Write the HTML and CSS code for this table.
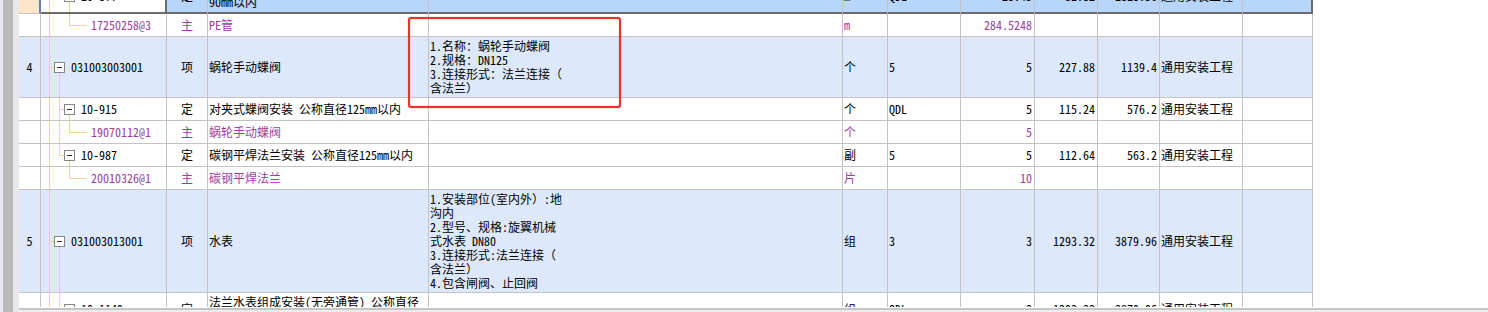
FILE: index.html
```html
<!DOCTYPE html>
<html lang="zh-CN">
<head>
<meta charset="utf-8">
<title>分部分项</title>
<link rel="stylesheet" href="styles.css">
</head>
<body>
<div class="app">
  <div class="side"><div class="sa"></div><div class="sb"></div><div class="sc"></div></div>
  <div class="main">
    <div class="view">
      <table class="grid">
        <colgroup>
          <col class="c-num"><col class="c-code"><col class="c-type"><col class="c-name"><col class="c-desc"><col class="c-unit"><col class="c-expr"><col class="c-qty"><col class="c-price"><col class="c-total"><col class="c-prof"><col class="c-last">
        </colgroup>
        <tbody>
          <tr class="sel">
            <td class="num"></td>
            <td class="code t-l2last"><div class="tree l2"><span class="tog"></span><span>10-377</span></div></td>
            <td class="type">定</td>
            <td class="ml top">室内塑料给水管(热熔连接) 公称外径<br>90mm以内</td>
            <td></td>
            <td>m</td>
            <td>QDL</td>
            <td class="r">28.45</td>
            <td class="r">81.32</td>
            <td class="r">2313.56</td>
            <td>通用安装工程</td>
            <td class="last"></td>
          </tr>
          <tr class="mat">
            <td class="num"></td>
            <td class="code t-l3end"><div class="tree l3"><span>17250258@3</span></div></td>
            <td class="type">主</td>
            <td>PE管</td>
            <td></td>
            <td>m</td>
            <td></td>
            <td class="r">284.5248</td>
            <td></td>
            <td></td>
            <td></td>
            <td></td>
          </tr>
          <tr class="item">
            <td class="num">4</td>
            <td class="code t-l1"><div class="tree l1"><span class="tog"></span><span>031003003001</span></div></td>
            <td class="type">项</td>
            <td>蜗轮手动蝶阀</td>
            <td class="ml">1.名称：蜗轮手动蝶阀<br>2.规格：DN125<br>3.连接形式：法兰连接（<br>含法兰）</td>
            <td>个</td>
            <td>5</td>
            <td class="r">5</td>
            <td class="r">227.88</td>
            <td class="r">1139.4</td>
            <td>通用安装工程</td>
            <td></td>
          </tr>
          <tr>
            <td class="num"></td>
            <td class="code t-l2mid"><div class="tree l2"><span class="tog"></span><span>10-915</span></div></td>
            <td class="type">定</td>
            <td>对夹式蝶阀安装 公称直径125mm以内</td>
            <td></td>
            <td>个</td>
            <td>QDL</td>
            <td class="r">5</td>
            <td class="r">115.24</td>
            <td class="r">576.2</td>
            <td>通用安装工程</td>
            <td></td>
          </tr>
          <tr class="mat">
            <td class="num"></td>
            <td class="code t-l3mid"><div class="tree l3"><span>19070112@1</span></div></td>
            <td class="type">主</td>
            <td>蜗轮手动蝶阀</td>
            <td></td>
            <td>个</td>
            <td></td>
            <td class="r">5</td>
            <td></td>
            <td></td>
            <td></td>
            <td></td>
          </tr>
          <tr>
            <td class="num"></td>
            <td class="code t-l2last"><div class="tree l2"><span class="tog"></span><span>10-987</span></div></td>
            <td class="type">定</td>
            <td>碳钢平焊法兰安装 公称直径125mm以内</td>
            <td></td>
            <td>副</td>
            <td>5</td>
            <td class="r">5</td>
            <td class="r">112.64</td>
            <td class="r">563.2</td>
            <td>通用安装工程</td>
            <td></td>
          </tr>
          <tr class="mat">
            <td class="num"></td>
            <td class="code t-l3end"><div class="tree l3"><span>20010326@1</span></div></td>
            <td class="type">主</td>
            <td>碳钢平焊法兰</td>
            <td></td>
            <td>片</td>
            <td></td>
            <td class="r">10</td>
            <td></td>
            <td></td>
            <td></td>
            <td></td>
          </tr>
          <tr class="item">
            <td class="num">5</td>
            <td class="code t-l1"><div class="tree l1"><span class="tog"></span><span>031003013001</span></div></td>
            <td class="type">项</td>
            <td>水表</td>
            <td class="ml">1.安装部位(室内外）:地<br>沟内<br>2.型号、规格:旋翼机械<br>式水表 DN80<br>3.连接形式:法兰连接（<br>含法兰）<br>4.包含闸阀、止回阀</td>
            <td>组</td>
            <td>3</td>
            <td class="r">3</td>
            <td class="r">1293.32</td>
            <td class="r">3879.96</td>
            <td>通用安装工程</td>
            <td></td>
          </tr>
          <tr>
            <td class="num"></td>
            <td class="code t-l2mid"><div class="tree l2"><span class="tog"></span><span>10-1149</span></div></td>
            <td class="type">定</td>
            <td class="ml">法兰水表组成安装(无旁通管) 公称直径<br>80mm以内</td>
            <td></td>
            <td>组</td>
            <td>QDL</td>
            <td class="r">3</td>
            <td class="r">1293.32</td>
            <td class="r">3879.96</td>
            <td>通用安装工程</td>
            <td></td>
          </tr>
        </tbody>
      </table>
    </div>
    <div class="hscroll"></div>
  </div>
  <div class="mark"></div>
</div>
</body>
</html>
```
FILE: styles.css
```css
html, body {
  margin: 0;
  padding: 0;
  background: #ffffff;
}
body {
  font-family: "Noto Sans Mono CJK SC", "Noto Sans CJK SC", "Liberation Sans", sans-serif;
  font-size: 12px;
  line-height: 14px;
  color: #000000;
}
.app {
  position: relative;
  display: flex;
  height: 312px;
  overflow: hidden;
}
.side {
  display: flex;
  flex: none;
  width: 19px;
}
.sa { width: 3px; background: #e6e9ed; }
.sb { width: 10px; background: #bababa; }
.sc { width: 6px; background: #e8e8e8; }

.main {
  flex: 1;
  display: flex;
  flex-direction: column;
  min-width: 0;
}
.view {
  height: 307px;
  overflow: hidden;
  flex: none;
}
.hscroll {
  flex: none;
  height: 5px;
  background: linear-gradient(#ffffff 0 1px, #c6c6c6 1px 3px, #ededed 3px);
}

.grid {
  border-collapse: separate;
  border-spacing: 0;
  table-layout: fixed;
  width: 1294px;
  margin-top: -21px;
}
.c-num { width: 22px; }
.c-code { width: 126px; }
.c-type { width: 41px; }
.c-name { width: 221px; }
.c-desc { width: 414px; }
.c-unit { width: 45px; }
.c-expr { width: 73px; }
.c-qty { width: 74px; }
.c-price { width: 63px; }
.c-total { width: 62px; }
.c-prof { width: 83px; }
.c-last { width: 70px; }

.grid td {
  box-sizing: border-box;
  border-right: 1px solid #c3c3c3;
  border-bottom: 1px solid #c3c3c3;
  padding: 4px 2px 4px 1px;
  vertical-align: middle;
  white-space: nowrap;
  overflow: hidden;
}
.grid td.ml { padding-top: 2px; padding-bottom: 2px; }
.grid td.ml.top { padding-bottom: 4px; }
.grid td.r { text-align: right; padding-right: 2px; }
.grid td.num, .grid td.type { text-align: center; padding-left: 0; padding-right: 0; }
.grid td.code { padding-left: 0; padding-right: 0; }

.item td { background-color: #dde9fb; }
.mat td { color: #9a3f9c; }

/* selected row */
.sel td {
  background-color: #b8d5fb;
  border-bottom-color: #6b6b6b;
  box-shadow: inset 0 -1px 0 #6b6b6b;
}
.sel td.num {
  background-color: #fde5c7;
  border-bottom-color: #c3c3c3;
  border-right-color: #5f83b3;
  box-shadow: inset -1px 0 0 #5f83b3;
}
.sel td.code {
  background-color: #ffffff;
  border-right-color: #6b6b6b;
  box-shadow: inset -1px -1px 0 #6b6b6b;
}
.sel td.last {
  border-right-color: #6b6b6b;
  box-shadow: inset -1px -1px 0 #6b6b6b;
}

/* tree */
.tree {
  display: flex;
  align-items: center;
  height: 14px;
}
.tree.l1 { padding-left: 13px; }
.tree.l2 { padding-left: 23px; }
.tree.l3 { padding-left: 50px; }
.tog {
  flex: none;
  box-sizing: border-box;
  width: 11px;
  height: 11px;
  margin-right: 6px;
  border: 1px solid #858585;
  background: linear-gradient(#2b2b2b, #2b2b2b) center / 5px 1px no-repeat, #ffffff;
}

.code {
  --tl: linear-gradient(#f2d199, #f2d199);
  background-repeat: no-repeat;
}
/* item row: root line, stub to box, line down from box */
.t-l1 {
  background-image: var(--tl), var(--tl), var(--tl);
  background-size: 1px 100%, 5px 1px, 1px 50%;
  background-position: 8px 0, 8px 50%, 18px 100%;
}
/* middle quota row with children */
.t-l2mid {
  background-image: var(--tl), var(--tl), var(--tl), var(--tl);
  background-size: 1px 100%, 1px 100%, 5px 1px, 1px 50%;
  background-position: 8px 0, 18px 0, 18px 50%, 28px 100%;
}
/* last quota row with children */
.t-l2last {
  background-image: var(--tl), var(--tl), var(--tl), var(--tl);
  background-size: 1px 100%, 1px 50%, 5px 1px, 1px 50%;
  background-position: 8px 0, 18px 0, 18px 50%, 28px 100%;
}
/* material row inside a continuing item */
.t-l3mid {
  background-image: var(--tl), var(--tl), var(--tl), var(--tl);
  background-size: 1px 100%, 1px 100%, 1px 50%, 18px 1px;
  background-position: 8px 0, 18px 0, 28px 0, 28px 50%;
}
/* material row at the end of an item */
.t-l3end {
  background-image: var(--tl), var(--tl), var(--tl);
  background-size: 1px 100%, 1px 50%, 18px 1px;
  background-position: 8px 0, 28px 0, 28px 50%;
}

/* red annotation frame */
.mark {
  position: absolute;
  left: 408px;
  top: 17px;
  width: 213px;
  height: 91px;
  box-sizing: border-box;
  border: 2px solid #e8332d;
  border-radius: 3px;
  box-shadow: 0 0 1px #e8332d, inset 0 0 1px #e8332d;
  pointer-events: none;
}
```
